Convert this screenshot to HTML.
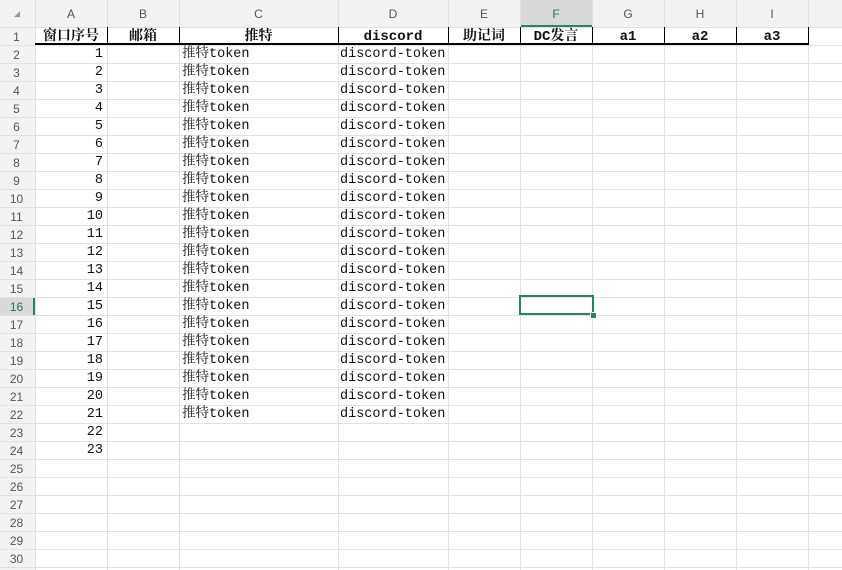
<!DOCTYPE html>
<html><head><meta charset="utf-8"><style>
body{margin:0;width:842px;height:570px;overflow:hidden;background:#fff;position:relative;font-family:"Liberation Mono","Noto Serif CJK SC",monospace;}
.v{position:absolute;width:1px;background:#e1e1e1;top:0;height:570px}
.h{position:absolute;height:1px;background:#e1e1e1;left:0;width:842px}
.hdr{position:absolute;top:0;height:27px;left:0;width:842px;background:#f3f3f3}
.rh{position:absolute;left:0;width:35px;top:27px;height:543px;background:#f3f3f3}
.ch{position:absolute;top:6px;font:12px "Liberation Sans",sans-serif;color:#555;text-align:center;line-height:16px}
.rn{position:absolute;left:0;width:33px;text-align:center;font:12px "Liberation Sans",sans-serif;color:#555;line-height:18px;padding-top:1px}
.t{position:absolute;font-size:13.5px;line-height:18px;padding-top:1px;color:#111;white-space:nowrap}
.b{font-weight:bold;text-align:center;font-family:"Liberation Mono","Noto Serif CJK SC",serif;font-size:14px}
.n{text-align:right;width:68px;left:35px}
</style></head><body>
<div class="hdr"></div><div class="rh"></div>
<div style="position:absolute;left:520px;top:0;width:72px;height:27px;background:#d9d9d9"></div>
<div style="position:absolute;left:520px;top:25px;width:72px;height:2px;background:#1e8a5e"></div>
<div style="position:absolute;left:0;top:297px;width:35px;height:18px;background:#d9d9d9"></div>
<div style="position:absolute;left:33px;top:297px;width:2px;height:18px;background:#1e8a5e"></div>
<div class="v" style="left:35px"></div><div class="v" style="left:107px"></div><div class="v" style="left:179px"></div><div class="v" style="left:338px"></div><div class="v" style="left:448px"></div><div class="v" style="left:520px"></div><div class="v" style="left:592px"></div><div class="v" style="left:664px"></div><div class="v" style="left:736px"></div><div class="v" style="left:808px"></div>
<div class="h" style="top:27px"></div><div class="h" style="top:45px"></div><div class="h" style="top:63px"></div><div class="h" style="top:81px"></div><div class="h" style="top:99px"></div><div class="h" style="top:117px"></div><div class="h" style="top:135px"></div><div class="h" style="top:153px"></div><div class="h" style="top:171px"></div><div class="h" style="top:189px"></div><div class="h" style="top:207px"></div><div class="h" style="top:225px"></div><div class="h" style="top:243px"></div><div class="h" style="top:261px"></div><div class="h" style="top:279px"></div><div class="h" style="top:297px"></div><div class="h" style="top:315px"></div><div class="h" style="top:333px"></div><div class="h" style="top:351px"></div><div class="h" style="top:369px"></div><div class="h" style="top:387px"></div><div class="h" style="top:405px"></div><div class="h" style="top:423px"></div><div class="h" style="top:441px"></div><div class="h" style="top:459px"></div><div class="h" style="top:477px"></div><div class="h" style="top:495px"></div><div class="h" style="top:513px"></div><div class="h" style="top:531px"></div><div class="h" style="top:549px"></div><div class="h" style="top:567px"></div>
<div style="position:absolute;left:35px;top:43px;width:774px;height:2px;background:#000"></div>
<div style="position:absolute;left:107px;top:27px;width:1px;height:18px;background:#000"></div><div style="position:absolute;left:179px;top:27px;width:1px;height:18px;background:#000"></div><div style="position:absolute;left:338px;top:27px;width:1px;height:18px;background:#000"></div><div style="position:absolute;left:448px;top:27px;width:1px;height:18px;background:#000"></div><div style="position:absolute;left:520px;top:27px;width:1px;height:18px;background:#000"></div><div style="position:absolute;left:592px;top:27px;width:1px;height:18px;background:#000"></div><div style="position:absolute;left:664px;top:27px;width:1px;height:18px;background:#000"></div><div style="position:absolute;left:736px;top:27px;width:1px;height:18px;background:#000"></div><div style="position:absolute;left:808px;top:27px;width:1px;height:18px;background:#000"></div>
<div style="position:absolute;left:14px;top:11px;width:0;height:0;border-left:6px solid transparent;border-bottom:6px solid #999"></div>
<div class="ch" style="left:35px;width:72px">A</div><div class="ch" style="left:107px;width:72px">B</div><div class="ch" style="left:179px;width:159px">C</div><div class="ch" style="left:338px;width:110px">D</div><div class="ch" style="left:448px;width:72px">E</div><div class="ch" style="left:520px;width:72px;color:#1e7a50">F</div><div class="ch" style="left:592px;width:72px">G</div><div class="ch" style="left:664px;width:72px">H</div><div class="ch" style="left:736px;width:72px">I</div>
<div class="rn" style="top:27px">1</div><div class="rn" style="top:45px">2</div><div class="rn" style="top:63px">3</div><div class="rn" style="top:81px">4</div><div class="rn" style="top:99px">5</div><div class="rn" style="top:117px">6</div><div class="rn" style="top:135px">7</div><div class="rn" style="top:153px">8</div><div class="rn" style="top:171px">9</div><div class="rn" style="top:189px">10</div><div class="rn" style="top:207px">11</div><div class="rn" style="top:225px">12</div><div class="rn" style="top:243px">13</div><div class="rn" style="top:261px">14</div><div class="rn" style="top:279px">15</div><div class="rn" style="top:297px;color:#1e7a50">16</div><div class="rn" style="top:315px">17</div><div class="rn" style="top:333px">18</div><div class="rn" style="top:351px">19</div><div class="rn" style="top:369px">20</div><div class="rn" style="top:387px">21</div><div class="rn" style="top:405px">22</div><div class="rn" style="top:423px">23</div><div class="rn" style="top:441px">24</div><div class="rn" style="top:459px">25</div><div class="rn" style="top:477px">26</div><div class="rn" style="top:495px">27</div><div class="rn" style="top:513px">28</div><div class="rn" style="top:531px">29</div><div class="rn" style="top:549px">30</div>
<div class="t b" style="top:27px;left:35px;width:72px">窗口序号</div>
<div class="t b" style="top:27px;left:107px;width:72px">邮箱</div>
<div class="t b" style="top:27px;left:179px;width:159px">推特</div>
<div class="t b" style="top:27px;left:338px;width:110px">discord</div>
<div class="t b" style="top:27px;left:448px;width:72px">助记词</div>
<div class="t b" style="top:27px;left:520px;width:72px">DC发言</div>
<div class="t b" style="top:27px;left:592px;width:72px">a1</div>
<div class="t b" style="top:27px;left:664px;width:72px">a2</div>
<div class="t b" style="top:27px;left:736px;width:72px">a3</div>
<div class="t n" style="top:45px">1</div><div class="t n" style="top:63px">2</div><div class="t n" style="top:81px">3</div><div class="t n" style="top:99px">4</div><div class="t n" style="top:117px">5</div><div class="t n" style="top:135px">6</div><div class="t n" style="top:153px">7</div><div class="t n" style="top:171px">8</div><div class="t n" style="top:189px">9</div><div class="t n" style="top:207px">10</div><div class="t n" style="top:225px">11</div><div class="t n" style="top:243px">12</div><div class="t n" style="top:261px">13</div><div class="t n" style="top:279px">14</div><div class="t n" style="top:297px">15</div><div class="t n" style="top:315px">16</div><div class="t n" style="top:333px">17</div><div class="t n" style="top:351px">18</div><div class="t n" style="top:369px">19</div><div class="t n" style="top:387px">20</div><div class="t n" style="top:405px">21</div><div class="t n" style="top:423px">22</div><div class="t n" style="top:441px">23</div>
<div class="t" style="left:182px;top:45px">推特token</div><div class="t" style="left:182px;top:63px">推特token</div><div class="t" style="left:182px;top:81px">推特token</div><div class="t" style="left:182px;top:99px">推特token</div><div class="t" style="left:182px;top:117px">推特token</div><div class="t" style="left:182px;top:135px">推特token</div><div class="t" style="left:182px;top:153px">推特token</div><div class="t" style="left:182px;top:171px">推特token</div><div class="t" style="left:182px;top:189px">推特token</div><div class="t" style="left:182px;top:207px">推特token</div><div class="t" style="left:182px;top:225px">推特token</div><div class="t" style="left:182px;top:243px">推特token</div><div class="t" style="left:182px;top:261px">推特token</div><div class="t" style="left:182px;top:279px">推特token</div><div class="t" style="left:182px;top:297px">推特token</div><div class="t" style="left:182px;top:315px">推特token</div><div class="t" style="left:182px;top:333px">推特token</div><div class="t" style="left:182px;top:351px">推特token</div><div class="t" style="left:182px;top:369px">推特token</div><div class="t" style="left:182px;top:387px">推特token</div><div class="t" style="left:182px;top:405px">推特token</div>
<div class="t" style="left:340px;top:45px">discord-token</div><div class="t" style="left:340px;top:63px">discord-token</div><div class="t" style="left:340px;top:81px">discord-token</div><div class="t" style="left:340px;top:99px">discord-token</div><div class="t" style="left:340px;top:117px">discord-token</div><div class="t" style="left:340px;top:135px">discord-token</div><div class="t" style="left:340px;top:153px">discord-token</div><div class="t" style="left:340px;top:171px">discord-token</div><div class="t" style="left:340px;top:189px">discord-token</div><div class="t" style="left:340px;top:207px">discord-token</div><div class="t" style="left:340px;top:225px">discord-token</div><div class="t" style="left:340px;top:243px">discord-token</div><div class="t" style="left:340px;top:261px">discord-token</div><div class="t" style="left:340px;top:279px">discord-token</div><div class="t" style="left:340px;top:297px">discord-token</div><div class="t" style="left:340px;top:315px">discord-token</div><div class="t" style="left:340px;top:333px">discord-token</div><div class="t" style="left:340px;top:351px">discord-token</div><div class="t" style="left:340px;top:369px">discord-token</div><div class="t" style="left:340px;top:387px">discord-token</div><div class="t" style="left:340px;top:405px">discord-token</div>
<div style="position:absolute;left:519px;top:295px;width:71px;height:16px;border:2px solid #1e8a5e"></div>
<div style="position:absolute;left:590px;top:312px;width:5px;height:5px;background:#1e8a5e;border:1px solid #fff"></div>
</body></html>
